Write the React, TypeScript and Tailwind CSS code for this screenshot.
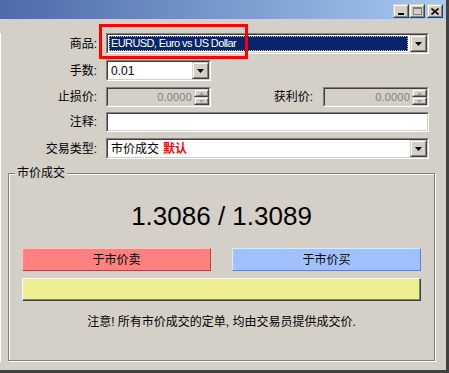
import React from "react";

const FONT = {
  fontFamily: '"Liberation Sans", "Noto Sans CJK SC", sans-serif',
};

// classic sunken field border
function Sunken({
  className = "",
  inner = "bg-white",
  children,
}: {
  className?: string;
  inner?: string;
  children?: React.ReactNode;
}) {
  return (
    <div
      className={`border border-t-[#808080] border-l-[#808080] border-b-white border-r-white ${className}`}
    >
      <div
        className={`h-full w-full border border-t-[#404040] border-l-[#404040] border-b-[#d4d0c8] border-r-[#d4d0c8] ${inner}`}
      >
        {children}
      </div>
    </div>
  );
}

function Raised({
  className = "",
  children,
}: {
  className?: string;
  children?: React.ReactNode;
}) {
  return (
    <div
      className={`border border-t-[#d4d0c8] border-l-[#d4d0c8] border-b-[#404040] border-r-[#404040] ${className}`}
    >
      <div className="h-full w-full border border-t-white border-l-white border-b-[#808080] border-r-[#808080] bg-[#d4d0c8] flex items-center justify-center">
        {children}
      </div>
    </div>
  );
}

function DropArrow() {
  return (
    <Raised className="w-[17px] h-[17px] shrink-0">
      <svg width="7" height="4" viewBox="0 0 7 4">
        <path d="M0 0h7L3.5 4z" fill="#000" />
      </svg>
    </Raised>
  );
}

function Combo({
  width,
  children,
  selected = false,
}: {
  width: string;
  children: React.ReactNode;
  selected?: boolean;
}) {
  return (
    <Sunken className={`${width} h-[21px]`}>
      <div className="flex h-full items-center">
        <div className="flex-1 h-full p-[1px] pr-[2px]">
          {selected ? (
            <div className="h-full bg-[#0a246a] text-white border border-dotted border-[#c8c8c8] flex items-center pl-[1px] text-[11px] tracking-[-0.6px]">
              {children}
            </div>
          ) : (
            <div className="h-full flex items-center pl-[2px] text-[12px] text-black">
              {children}
            </div>
          )}
        </div>
        <DropArrow />
      </div>
    </Sunken>
  );
}

function Spin({ width }: { width: string }) {
  return (
    <Sunken className={`${width} h-[20px]`} inner="bg-[#d4d0c8]">
      <div className="flex h-full items-center">
        <div className="flex-1 text-right pr-[2px] text-[11px] text-[#808080] tracking-[0.2px]">
          0.0000
        </div>
        <div className="flex flex-col w-[15px] h-full">
          <Raised className="flex-1">
            <svg width="5" height="3" viewBox="0 0 5 3">
              <path d="M2.5 0L5 3H0z" fill="#a0a0a0" />
            </svg>
          </Raised>
          <Raised className="flex-1">
            <svg width="5" height="3" viewBox="0 0 5 3">
              <path d="M0 0h5L2.5 3z" fill="#a0a0a0" />
            </svg>
          </Raised>
        </div>
      </div>
    </Sunken>
  );
}

function Label({ children, w = "w-[98px]" }: { children: React.ReactNode; w?: string }) {
  return <div className={`${w} text-right text-[12px] text-black pr-[1px]`}>{children}</div>;
}

export default function App() {
  return (
    <div
      className="relative w-[449px] h-[373px] bg-[#d4d0c8] overflow-hidden border-r-[3px] border-b-[3px] border-r-[#404040] border-b-[#404040] flex flex-col"
      style={FONT}
    >
      {/* title bar */}
      <div className="h-[19px] shrink-0 bg-gradient-to-r from-[#4d6ba8] to-[#a6caf0] flex items-start justify-end pt-[4px] pr-[3px]">
        <Raised className="w-[16px] h-[14px]">
          <div className="w-[6px] h-[2px] bg-black mt-[5px]" />
        </Raised>
        <Raised className="w-[16px] h-[14px]">
          <div className="w-[9px] h-[8px] border border-[#808080] border-t-2" />
        </Raised>
        <Raised className="w-[16px] h-[14px] ml-[2px]">
          <svg width="8" height="7" viewBox="0 0 8 7">
            <path d="M0.5 0.5L7.5 6.5M7.5 0.5L0.5 6.5" stroke="#000" strokeWidth="1.6" />
          </svg>
        </Raised>
      </div>

      {/* left edge of another frame */}
      <div className="absolute left-0 top-[33px] w-[1px] h-[329px] bg-white" />

      {/* form */}
      <div className="flex flex-col mt-[14px]">
        <div className="flex items-center h-[21px]">
          <Label>商品:</Label>
          <div className="ml-[8px]">
            <Combo width="w-[323px]" selected>
              EURUSD, Euro vs US Dollar
            </Combo>
          </div>
        </div>

        <div className="flex items-center h-[21px] mt-[6px]">
          <Label>手数:</Label>
          <div className="ml-[8px]">
            <Combo width="w-[105px]">0.01</Combo>
          </div>
        </div>

        <div className="flex items-center h-[20px] mt-[6px]">
          <Label>止损价:</Label>
          <div className="ml-[8px]">
            <Spin width="w-[105px]" />
          </div>
          <Label w="w-[103px]">获利价:</Label>
          <div className="ml-[9px]">
            <Spin width="w-[106px]" />
          </div>
        </div>

        <div className="flex items-center h-[20px] mt-[5px]">
          <Label>注释:</Label>
          <div className="ml-[8px]">
            <Sunken className="w-[323px] h-[20px]" />
          </div>
        </div>

        <div className="flex items-center h-[21px] mt-[6px]">
          <Label>交易类型:</Label>
          <div className="ml-[8px]">
            <Combo width="w-[323px]">
              <span className="text-[12px]">市价成交</span>
              <span className="text-[12px] font-bold text-[#ff0000] ml-[4px]">默认</span>
            </Combo>
          </div>
        </div>
      </div>

      {/* group box */}
      <div className="relative ml-[8px] mt-[14px] w-[427px] h-[188px] border border-[#808080] shadow-[inset_1px_1px_0_#fff,1px_1px_0_#fff] flex flex-col items-center">
        <div className="absolute -top-[9px] left-[6px] bg-[#d4d0c8] px-[2px] text-[12px] leading-[16px] text-black">
          市价成交
        </div>

        <div className="mt-[27px] h-[30px] leading-[30px] text-[26px] text-black">
          1.3086 / 1.3089
        </div>

        <div className="mt-[17px] flex gap-[21px]">
          <button className="w-[189px] h-[23px] bg-[#ff8080] border border-t-[#ffc0c0] border-l-[#ffc0c0] border-b-[#c04040] border-r-[#c04040] text-[12px] text-black">
            于市价卖
          </button>
          <button className="w-[189px] h-[23px] bg-[#a0c0ff] border border-t-[#d8ecff] border-l-[#d8ecff] border-b-[#6080d0] border-r-[#6080d0] text-[12px] text-black">
            于市价买
          </button>
        </div>

        <div className="mt-[7px] w-[399px] h-[23px] border border-t-white border-l-white border-b-[#404040] border-r-[#404040]">
          <div className="h-full w-full border-b border-r border-b-[#808080] border-r-[#808080] bg-[#eeee90]" />
        </div>

        <div className="mt-[13px] text-[12px] leading-[16px] text-black">
          注意! 所有市价成交的定单, 均由交易员提供成交价.
        </div>
      </div>

      {/* red highlight annotation */}
      <div className="absolute left-[99px] top-[24px] w-[149px] h-[35px] border-[3px] border-[#ff0000]" />
    </div>
  );
}
